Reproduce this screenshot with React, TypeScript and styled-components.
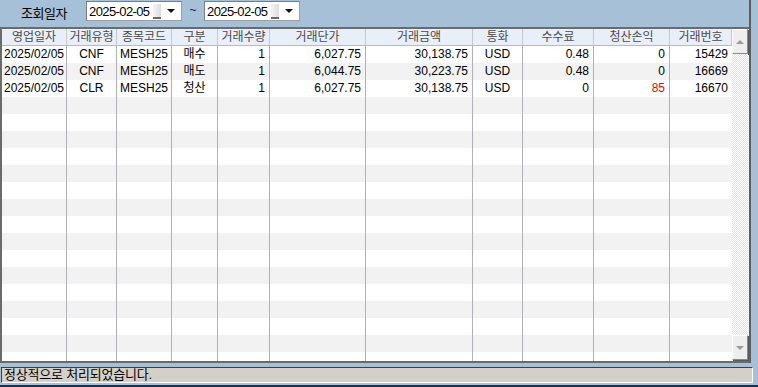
import React from "react";
import styled, { createGlobalStyle } from "styled-components";

const GlobalStyle = createGlobalStyle`
  html, body {
    margin: 0;
    padding: 0;
    background: #a6c0d8;
    overflow: hidden;
  }
  body {
    font-family: "Liberation Sans", "Noto Sans CJK KR", sans-serif;
    font-size: 12px;
  }
`;

type Row = {
  date: string;
  type: string;
  code: string;
  side: string;
  qty: string;
  price: string;
  amount: string;
  cur: string;
  fee: string;
  pnl: string;
  no: string;
};

const rows: Row[] = [
  { date: "2025/02/05", type: "CNF", code: "MESH25", side: "매수", qty: "1", price: "6,027.75", amount: "30,138.75", cur: "USD", fee: "0.48", pnl: "0", no: "15429" },
  { date: "2025/02/05", type: "CNF", code: "MESH25", side: "매도", qty: "1", price: "6,044.75", amount: "30,223.75", cur: "USD", fee: "0.48", pnl: "0", no: "16669" },
  { date: "2025/02/05", type: "CLR", code: "MESH25", side: "청산", qty: "1", price: "6,027.75", amount: "30,138.75", cur: "USD", fee: "0", pnl: "85", no: "16670" },
];

const columns: { title: string; key: keyof Row; align: "left" | "center" | "right" }[] = [
  { title: "영업일자", key: "date", align: "center" },
  { title: "거래유형", key: "type", align: "center" },
  { title: "종목코드", key: "code", align: "center" },
  { title: "구분", key: "side", align: "center" },
  { title: "거래수량", key: "qty", align: "right" },
  { title: "거래단가", key: "price", align: "right" },
  { title: "거래금액", key: "amount", align: "right" },
  { title: "통화", key: "cur", align: "center" },
  { title: "수수료", key: "fee", align: "right" },
  { title: "청산손익", key: "pnl", align: "right" },
  { title: "거래번호", key: "no", align: "right" },
];

const TOTAL_ROWS = 20;

const App = () => {
  const body: (Row | null)[] = [...rows];
  while (body.length < TOTAL_ROWS) body.push(null);

  return (
    <Wrapper>
      <GlobalStyle />
      <Main>
        <Toolbar>
          <Label>조회일자</Label>
          <DateBox>
            <DateText>2025-02-05</DateText>
            <Caret />
            <DropButton>
              <DownArrow />
            </DropButton>
          </DateBox>
          <Tilde>~</Tilde>
          <DateBox>
            <DateText>2025-02-05</DateText>
            <Caret />
            <DropButton>
              <DownArrow />
            </DropButton>
          </DateBox>
        </Toolbar>
        <Grid>
          <Table>
            <HeaderRow>
              {columns.map((c) => (
                <HeaderCell key={c.key}>{c.title}</HeaderCell>
              ))}
            </HeaderRow>
            {body.map((r, i) => (
              <BodyRow key={i} $odd={i % 2 === 1}>
                {columns.map((c) => (
                  <Cell key={c.key} $align={c.align} $red={c.key === "pnl" && r?.pnl === "85"}>
                    {r ? r[c.key] : ""}
                  </Cell>
                ))}
              </BodyRow>
            ))}
          </Table>
          <ScrollBar>
            <ScrollButton>
              <ScrollArrow $up />
            </ScrollButton>
            <Track />
            <ScrollButton>
              <ScrollArrow />
            </ScrollButton>
          </ScrollBar>
        </Grid>
      </Main>
      <StatusBar>정상적으로 처리되었습니다.</StatusBar>
      <BottomEdge />
    </Wrapper>
  );
};

export default App;

const Wrapper = styled.div`
  width: 758px;
  height: 387px;
  display: flex;
  flex-direction: column;
  background: #a6c0d8;
`;

const Main = styled.div`
  width: 749px;
  border-right: 2px solid #5e5e5e;
  display: flex;
  flex-direction: column;
`;

const Toolbar = styled.div`
  height: 27px;
  display: flex;
  align-items: flex-start;
  padding-left: 21px;
  box-sizing: border-box;
`;

const Label = styled.div`
  width: 65px;
  margin-top: 3px;
  font-size: 13px;
  color: #000;
  letter-spacing: -0.5px;
  white-space: nowrap;
`;

const DateBox = styled.div`
  width: 96px;
  height: 20px;
  margin-top: 1px;
  box-sizing: border-box;
  background: #fff;
  border: 1px solid #7c7c7c;
  border-right-color: #a0a0a0;
  border-bottom-color: #a0a0a0;
  display: flex;
  align-items: center;
  padding-left: 2px;
`;

const DateText = styled.span`
  font-size: 13px;
  color: #000;
  letter-spacing: -0.6px;
  width: 62px;
  flex-shrink: 0;
  white-space: nowrap;
`;

const Caret = styled.span`
  width: 8px;
  height: 15px;
  margin-left: 2px;
  flex-shrink: 0;
  box-sizing: border-box;
  background: linear-gradient(to right, #f4f4f4, #dcdcdc);
  border-bottom: 2px solid #6a6a6a;
`;

const DropButton = styled.span`
  flex: 1;
  height: 100%;
  display: flex;
  align-items: center;
  justify-content: center;
`;

const DownArrow = styled.span`
  width: 0;
  height: 0;
  border-left: 4px solid transparent;
  border-right: 4px solid transparent;
  border-top: 4px solid #111;
`;

const Tilde = styled.div`
  width: 22px;
  margin-top: 3px;
  text-align: center;
  font-size: 12px;
  color: #222;
`;

const Grid = styled.div`
  height: 336px;
  box-sizing: border-box;
  border-top: 2px solid #6b6b6b;
  border-left: 2px solid #6b6b6b;
  border-bottom: 2px solid #6b6b6b;
  display: flex;
  background: #fff;
  overflow: hidden;
`;

const Table = styled.div`
  width: 730px;
  overflow: hidden;
`;

const gridCols = "65px 50px 55px 46px 52px 96px 107px 50px 71px 76px 62px";

const HeaderRow = styled.div`
  display: grid;
  grid-template-columns: ${gridCols};
  height: 17px;
  box-sizing: border-box;
  background: #e9eff8;
  border-bottom: 1px solid #b8b8c0;
`;

const HeaderCell = styled.div`
  border-right: 1px solid #c4c8d0;
  text-align: center;
  color: #4a4a4a;
  line-height: 16px;
  white-space: nowrap;
  overflow: hidden;
`;

const BodyRow = styled.div<{ $odd: boolean }>`
  display: grid;
  grid-template-columns: ${gridCols};
  height: 17px;
  background: ${(p) => (p.$odd ? "#f2f2f2" : "#ffffff")};
`;

const Cell = styled.div<{ $align: string; $red: boolean }>`
  border-right: 1px solid #b0b0b8;
  text-align: ${(p) => p.$align};
  padding: 0 ${(p) => (p.$align === "right" ? "4px" : "0")} 0 0;
  color: ${(p) => (p.$red ? "#ff0000" : "#000")};
  line-height: 17px;
  white-space: nowrap;
  overflow: hidden;
  &:last-child {
    border-right: none;
  }
`;

const ScrollBar = styled.div`
  width: 17px;
  display: flex;
  flex-direction: column;
  padding: 0 1px 1px 0;
  box-sizing: border-box;
  background: #fff;
`;

const ScrollButton = styled.div`
  height: 25px;
  box-sizing: border-box;
  background: #eeeeee;
  border: 1px solid;
  border-color: #ffffff #8a8a8a #8a8a8a #ffffff;
  box-shadow: 1px 1px 0 #5a5a5a;
  display: flex;
  align-items: center;
  justify-content: center;
`;

const ScrollArrow = styled.span<{ $up?: boolean }>`
  width: 0;
  height: 0;
  border-left: 4px solid transparent;
  border-right: 4px solid transparent;
  ${(p) =>
    p.$up ? "border-bottom: 4px solid #9a9a9a;" : "border-top: 4px solid #9a9a9a;"}
`;

const Track = styled.div`
  flex: 1;
  background-color: #ffffff;
  background-image: conic-gradient(#e2e2e2 25%, #ffffff 0 50%, #e2e2e2 0 75%, #ffffff 0);
  background-size: 2px 2px;
`;

const StatusBar = styled.div`
  margin: 4px 5px 0 1px;
  height: 16px;
  box-sizing: border-box;
  background: #d4d0c8;
  border: 1px solid;
  border-color: #404040 #ffffff #ffffff #404040;
  padding-left: 2px;
  line-height: 14px;
  font-size: 13px;
  letter-spacing: -0.2px;
  color: #000;
  white-space: nowrap;
`;

const BottomEdge = styled.div`
  margin-top: auto;
  height: 2px;
  background: #1d2d4d;
`;
